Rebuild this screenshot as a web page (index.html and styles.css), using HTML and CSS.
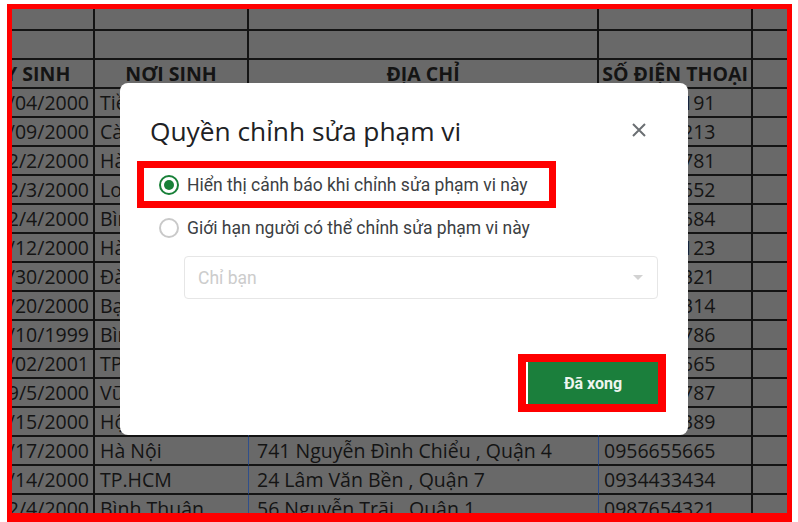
FILE: index.html
```html
<!DOCTYPE html>
<html lang="vi">
<head>
<meta charset="utf-8">
<title>Quyền chỉnh sửa phạm vi</title>
<link rel="stylesheet" href="styles.css">
</head>
<body>
<div class="frame">
  <div class="sheet">
    <div class="c"></div><div class="c"></div><div class="c"></div><div class="c"></div><div class="c"></div>
    <div class="c"></div><div class="c"></div><div class="c"></div><div class="c"></div><div class="c"></div>
    <div class="c h">NGÀY SINH</div><div class="c h">NƠI SINH</div><div class="c h">ĐỊA CHỈ</div><div class="c h">SỐ ĐIỆN THOẠI</div><div class="c"></div>

    <div class="c r">01/04/2000</div><div class="c p">Tiền Giang</div><div class="c b">12 Lê Lợi , Quận 1</div><div class="c">0912345191</div><div class="c"></div>
    <div class="c r">11/09/2000</div><div class="c p">Cà Mau</div><div class="c b">35 Hai Bà Trưng , Quận 3</div><div class="c">0987654213</div><div class="c"></div>
    <div class="c r">12/2/2000</div><div class="c p">Hà Nội</div><div class="c b">8 Trần Hưng Đạo , Quận 5</div><div class="c">0978123781</div><div class="c"></div>
    <div class="c r">12/3/2000</div><div class="c p">Long An</div><div class="c b">102 Lý Thường Kiệt , Quận 10</div><div class="c">0909876552</div><div class="c"></div>
    <div class="c r">12/4/2000</div><div class="c p">Bình Dương</div><div class="c b">77 Cách Mạng Tháng 8 , Quận 3</div><div class="c">0933221584</div><div class="c"></div>
    <div class="c r">01/12/2000</div><div class="c p">Hà Nội</div><div class="c b">15 Nguyễn Huệ , Quận 1</div><div class="c">0945678123</div><div class="c"></div>
    <div class="c r">04/30/2000</div><div class="c p">Đà Nẵng</div><div class="c b">210 Điện Biên Phủ , Bình Thạnh</div><div class="c">0967854321</div><div class="c"></div>
    <div class="c r">05/20/2000</div><div class="c p">Bạc Liêu</div><div class="c b">9 Võ Văn Tần , Quận 3</div><div class="c">0918765314</div><div class="c"></div>
    <div class="c r">06/10/1999</div><div class="c p">Bình Định</div><div class="c b">48 Phan Xích Long , Phú Nhuận</div><div class="c">0934567786</div><div class="c"></div>
    <div class="c r">07/02/2001</div><div class="c p">TP.HCM</div><div class="c b">63 Nguyễn Văn Cừ , Quận 5</div><div class="c">0922334565</div><div class="c"></div>
    <div class="c r">19/5/2000</div><div class="c p">Vũng Tàu</div><div class="c b">5 Lê Duẩn , Quận 1</div><div class="c">0988112787</div><div class="c"></div>
    <div class="c r">08/15/2000</div><div class="c p">Hội An</div><div class="c b">120 Pasteur , Quận 3</div><div class="c">0977665389</div><div class="c"></div>
    <div class="c r">09/17/2000</div><div class="c p">Hà Nội</div><div class="c b">741 Nguyễn Đình Chiểu , Quận 4</div><div class="c">0956655665</div><div class="c"></div>
    <div class="c r">10/14/2000</div><div class="c p">TP.HCM</div><div class="c b">24 Lâm Văn Bền , Quận 7</div><div class="c">0934433434</div><div class="c"></div>
    <div class="c r">12/4/2000</div><div class="c p">Bình Thuận</div><div class="c b">56 Nguyễn Trãi , Quận 1</div><div class="c">0987654321</div><div class="c"></div>
  </div>
</div>

<div class="dialog">
  <div class="dlg-head">
    <div class="dlg-title">Quyền chỉnh sửa phạm vi</div>
    <div class="close">
      <svg width="14" height="14" viewBox="0 0 14 14"><path d="M1 1L13 13M13 1L1 13" stroke="#6b6f73" stroke-width="2" fill="none"/></svg>
    </div>
  </div>
  <div class="opt opt-hl">
    <span class="radio on"><span class="dot"></span></span>
    <span class="lbl">Hiển thị cảnh báo khi chỉnh sửa phạm vi này</span>
  </div>
  <div class="opt">
    <span class="radio"></span>
    <span class="lbl">Giới hạn người có thể chỉnh sửa phạm vi này</span>
  </div>
  <div class="select">
    <span class="ph">Chỉ bạn</span>
    <span class="caret"></span>
  </div>
  <div class="dlg-foot">
    <div class="btn-hl"><div class="btn">Đã xong</div></div>
  </div>
</div>
</body>
</html>
```
FILE: styles.css
```css
html, body {
  margin: 0;
  padding: 0;
  background: #ffffff;
}
body {
  width: 798px;
  height: 522px;
  overflow: hidden;
  position: relative;
}
.frame {
  box-sizing: border-box;
  margin: 4px 0 0 7px;
  width: 785px;
  height: 518px;
  border: 5px solid #ff0000;
  border-bottom-width: 9px;
  overflow: hidden;
  background: #686868;
}
.sheet {
  display: grid;
  grid-template-columns: 156px 154px 350px 154px 200px;
  grid-auto-rows: 29px;
  margin: -7px 0 0 -73px;
  font-family: "Open Sans", "DejaVu Sans", sans-serif;
  font-size: 19.5px;
  color: #141414;
}
.c {
  box-sizing: border-box;
  border-right: 2px solid #141414;
  border-bottom: 2px solid #141414;
  display: flex;
  align-items: center;
  padding: 0 5px;
  white-space: nowrap;
  overflow: hidden;
  background: #696969;
}
.c.h {
  justify-content: center;
  font-weight: 700;
  padding: 0;
}
.c.r {
  justify-content: flex-end;
  padding-right: 4px;
}
.c.p {
  border-right: 1px solid #2f4f8c;
  padding-right: 6px;
}
.c.b {
  padding-left: 8px;
  border-right: 1px solid #2f4f8c;
  padding-right: 6px;
}
.dialog {
  position: absolute;
  left: 120px;
  top: 83px;
  width: 568px;
  height: 352px;
  box-sizing: border-box;
  background: #ffffff;
  border-radius: 8px;
  padding: 32px 30px 0 30px;
  display: flex;
  flex-direction: column;
  font-family: Roboto, "Liberation Sans", sans-serif;
}
.dlg-head {
  display: flex;
  align-items: center;
  justify-content: space-between;
  height: 32px;
}
.dlg-title {
  font-family: "Open Sans", Roboto, sans-serif;
  font-size: 26.3px;
  color: #202124;
  line-height: 32px;
}
.close {
  width: 24px;
  height: 24px;
  display: flex;
  align-items: center;
  justify-content: center;
  margin-right: 7px;
  margin-top: -2px;
}
.opt {
  display: flex;
  align-items: center;
  height: 40px;
  padding-left: 9px;
  font-size: 17.5px;
  color: #3c4043;
}
.opt-hl {
  box-sizing: border-box;
  margin: 14px 0 0 -13px;
  width: 419px;
  height: 47px;
  border: 7px solid #ff0000;
  padding-left: 15px;
}
.radio {
  box-sizing: border-box;
  width: 20px;
  height: 20px;
  border-radius: 50%;
  border: 2px solid #c9c9c9;
  margin-right: 8px;
  display: flex;
  align-items: center;
  justify-content: center;
  flex: none;
}
.radio.on {
  border-color: #188038;
}
.dot {
  width: 10px;
  height: 10px;
  border-radius: 50%;
  background: #188038;
}
.select {
  box-sizing: border-box;
  margin: 8px 0 0 34px;
  width: 474px;
  height: 43px;
  border: 1px solid #e6e6e6;
  border-radius: 4px;
  display: flex;
  align-items: center;
  justify-content: space-between;
  padding: 0 14px 0 13px;
}
.ph {
  font-size: 17.5px;
  color: #cccccc;
}
.caret {
  width: 0;
  height: 0;
  border-left: 5px solid transparent;
  border-right: 5px solid transparent;
  border-top: 5px solid #d2d2d2;
}
.dlg-foot {
  display: flex;
  justify-content: flex-end;
  margin: 55px -8px 0 0;
}
.btn-hl {
  border: 8px solid #ff0000;
  padding-left: 2px;
  background: #ffffff;
}
.btn {
  width: 130px;
  height: 42px;
  background: #1b7f3c;
  color: #eef5ef;
  font-weight: 700;
  font-size: 16px;
  display: flex;
  align-items: center;
  justify-content: center;
}
```
